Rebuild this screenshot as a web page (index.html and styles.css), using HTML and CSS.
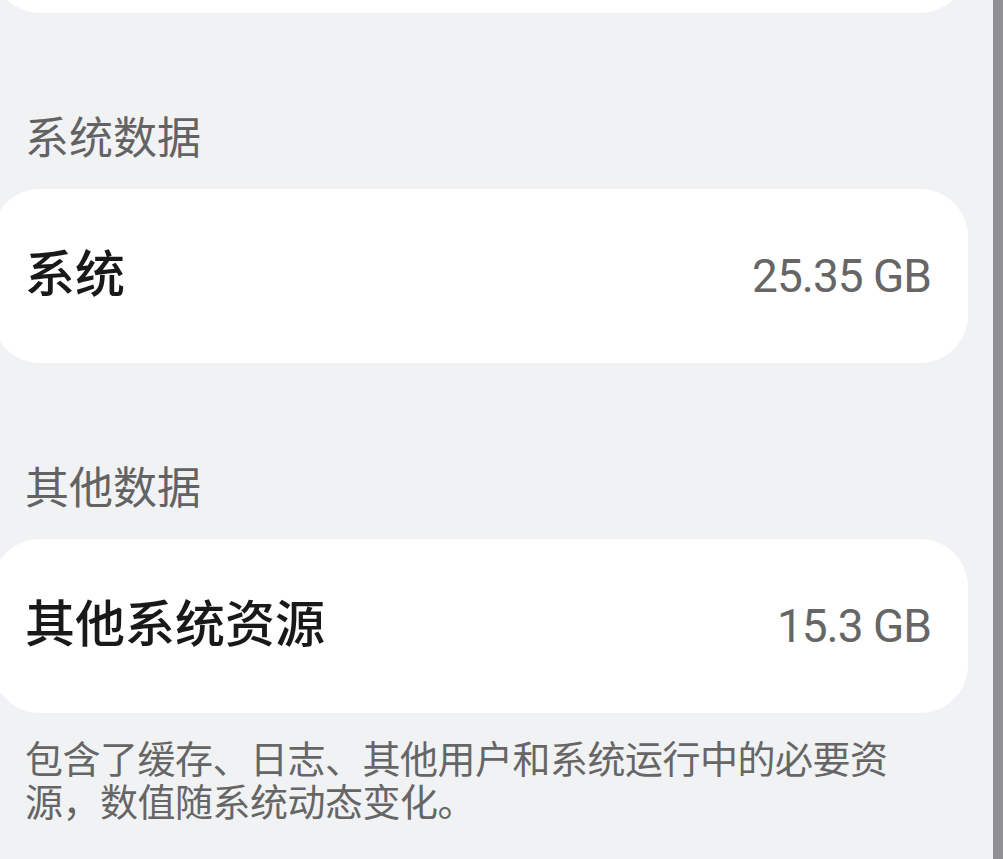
FILE: index.html
```html
<!DOCTYPE html>
<html lang="zh-CN">
<head>
<meta charset="utf-8">
<title>存储</title>
<link rel="stylesheet" href="styles.css">
</head>
<body>
<div class="page">
  <main class="main">
    <div class="card card-top"></div>

    <h2 class="section-title">系统数据</h2>
    <div class="card row">
      <span class="row-label">系统</span>
      <span class="row-value">25.35 GB</span>
    </div>

    <h2 class="section-title">其他数据</h2>
    <div class="card row">
      <span class="row-label">其他系统资源</span>
      <span class="row-value">15.3 GB</span>
    </div>

    <p class="note">包含了缓存、日志、其他用户和系统运行中的必要资源，数值随系统动态变化。</p>
  </main>
  <div class="scrollbar"></div>
</div>
</body>
</html>
```

FILE: styles.css
```css
html, body {
  margin: 0;
  padding: 0;
  height: 100%;
  overflow: hidden;
}

body {
  background: #f1f2f4;
  font-family: "Noto Sans CJK SC", "Noto Sans", sans-serif;
  color: #191919;
}

.page {
  display: flex;
  height: 859px;
}

.main {
  flex: 1;
  min-width: 0;
}

.scrollbar {
  width: 10px;
  flex: none;
  background: #909092;
}

.card {
  background: #ffffff;
  border-radius: 48px;
  margin-left: -8px;
  margin-right: 25px;
}

.card-top {
  height: 100px;
  margin-top: -87px;
}

.section-title {
  margin: 0;
  padding: 96px 0 28px 25px;
  font-size: 44px;
  line-height: 52px;
  font-weight: 400;
  color: #636363;
}

.row {
  display: flex;
  align-items: center;
  justify-content: space-between;
  height: 174px;
  box-sizing: border-box;
  padding: 0 37px 0 33px;
}

.row-label {
  font-size: 50px;
  line-height: 60px;
  padding-bottom: 12px;
  font-weight: 500;
  color: #191919;
}

.row-value {
  font-family: Roboto, "Noto Sans", sans-serif;
  font-size: 46px;
  line-height: 60px;
  letter-spacing: -1px;
  color: #666666;
}

.note {
  margin: 22px 0 0 0;
  padding: 0 88px 0 25px;
  font-size: 38px;
  line-height: 43px;
  letter-spacing: -0.5px;
  color: #666666;
}
```
